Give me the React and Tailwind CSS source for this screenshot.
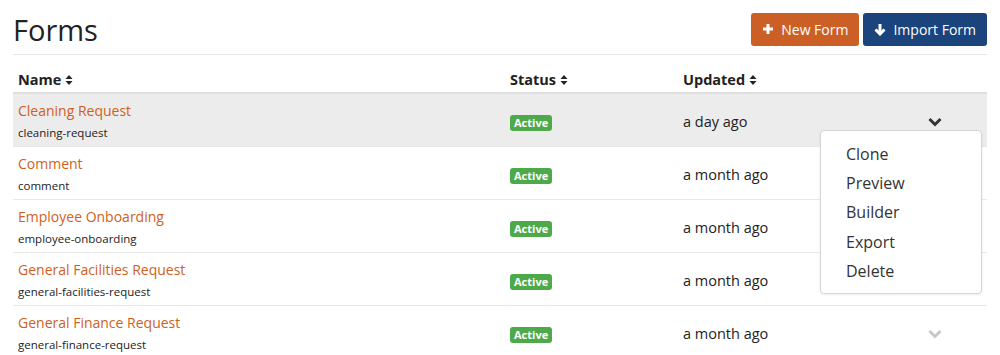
import React from "react";

const forms = [
  { title: "Cleaning Request", slug: "cleaning-request", updated: "a day ago" },
  { title: "Comment", slug: "comment", updated: "a month ago" },
  { title: "Employee Onboarding", slug: "employee-onboarding", updated: "a month ago" },
  { title: "General Facilities Request", slug: "general-facilities-request", updated: "a month ago" },
  { title: "General Finance Request", slug: "general-finance-request", updated: "a month ago" },
];

const SortIcon = () => (
  <svg width="8" height="12" viewBox="0 0 8 12" className="ml-[4px] inline-block">
    <path d="M0.5 5 L4 1 L7.5 5 Z" fill="currentColor" />
    <path d="M0.5 7 L4 11 L7.5 7 Z" fill="currentColor" />
  </svg>
);

const Chevron = ({ className }) => (
  <svg width="14" height="10" viewBox="0 0 14 10" className={className}>
    <path d="M1.5 2 L7 7.5 L12.5 2" fill="none" stroke="currentColor" strokeWidth="3" />
  </svg>
);

const menu = ["Clone", "Preview", "Builder", "Export", "Delete"];

export default function App() {
  return (
    <div
      className="w-[1000px] h-[355px] overflow-hidden bg-white px-[13px] text-[#333]"
      style={{ fontFamily: '"Open Sans", sans-serif' }}
    >
      {/* Title bar */}
      <div className="flex items-center justify-between h-[55px] border-b border-[#e5e5e5]">
        <h1 className="text-[29px] leading-none font-normal text-[#222] pt-[4px]">Forms</h1>
        <div className="flex gap-[4px] pt-[4px]">
          <button className="flex items-center gap-[7px] h-[33px] px-[11px] rounded-[3px] bg-[#cb5f25] text-white text-[14px]">
            <svg width="12" height="12" viewBox="0 0 12 12">
              <path d="M6 1 V11 M1 6 H11" stroke="currentColor" strokeWidth="3" />
            </svg>
            New Form
          </button>
          <button className="flex items-center gap-[7px] h-[33px] px-[11px] rounded-[3px] bg-[#1b437c] text-white text-[14px]">
            <svg width="12" height="13" viewBox="0 0 12 13">
              <path d="M6 1 V10" stroke="currentColor" strokeWidth="3" />
              <path d="M1.5 6.5 L6 11 L10.5 6.5" fill="none" stroke="currentColor" strokeWidth="3" />
            </svg>
            Import Form
          </button>
        </div>
      </div>

      {/* Table header */}
      <div className="flex items-center h-[39px] border-b-2 border-[#dfdfdf] text-[14.5px] font-bold text-[#222] pt-[12px]">
        <div className="w-[492px] pl-[5px] flex items-center">Name<SortIcon /></div>
        <div className="w-[173px] pl-[5px] flex items-center">Status<SortIcon /></div>
        <div className="pl-[5px] flex items-center">Updated<SortIcon /></div>
      </div>

      {/* Rows */}
      <div>
        {forms.map((f, i) => (
          <div
            key={f.slug}
            className={`relative flex items-center h-[53px] border-b border-[#e8e8e8] ${i === 0 ? "bg-[#ececec]" : ""}`}
          >
            <div className="w-[492px] pl-[5px] pt-[3px]">
              <div className="text-[14px] leading-[20px] text-[#cf5f21]">{f.title}</div>
              <div className="text-[11.5px] leading-[18px] mt-[3px] text-[#222]">{f.slug}</div>
            </div>
            <div className="w-[173px] pl-[5px] pt-[1px]">
              <span className="inline-block bg-[#4ea94a] text-white text-[11px] font-bold leading-[16px] px-[4px] rounded-[3px]">
                Active
              </span>
            </div>
            <div className="w-[220px] pl-[5px] pt-[3px] text-[14.5px] text-[#222]">{f.updated}</div>
            <div className="flex-1 flex justify-center pr-[16px] pt-[4px]">
              <Chevron className={i === 0 ? "text-[#333]" : "text-[#c8c8c8]"} />
            </div>

            {i === 0 && (
              <div className="absolute left-[807px] top-[36px] z-10 w-[162px] py-[8px] bg-white border border-[#d6d6d6] rounded-[4px] shadow-[0_1px_3px_rgba(0,0,0,0.08)]">
                {menu.map((m) => (
                  <div key={m} className="h-[29.3px] flex items-center pl-[25px] text-[16px] text-[#333]">
                    {m}
                  </div>
                ))}
              </div>
            )}
          </div>
        ))}
      </div>
    </div>
  );
}
